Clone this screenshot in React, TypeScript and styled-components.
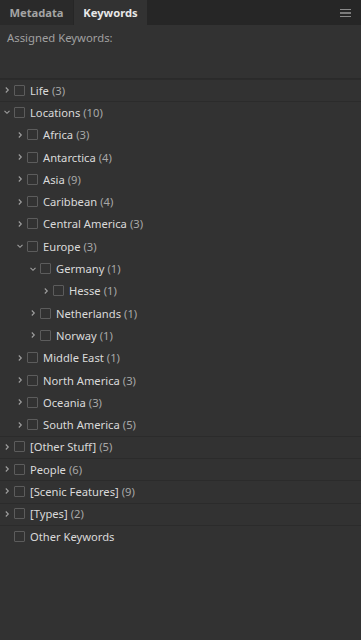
import React from "react";
import styled, { createGlobalStyle } from "styled-components";

const Global = createGlobalStyle`
  html, body { margin: 0; padding: 0; background: #323232; }
  body { font-family: "Noto Sans", "Open Sans", sans-serif; -webkit-font-smoothing: antialiased; }
  * { box-sizing: border-box; }
`;

const Panel = styled.div`
  width: 361px;
  height: 640px;
  background: #323232;
  display: flex;
  flex-direction: column;
  overflow: hidden;
`;

const TabBar = styled.div`
  height: 25px;
  background: #262626;
  display: flex;
  align-items: stretch;
  gap: 1px;
`;

const Tab = styled.div<{ $active?: boolean }>`
  width: 73px;
  display: flex;
  align-items: center;
  justify-content: center;
  font-size: 11.2px;
  font-weight: 700;
  color: ${(p) => (p.$active ? "#e8e8e8" : "#a4a4a4")};
  background: ${(p) => (p.$active ? "#323232" : "#2a2a2a")};
  padding-bottom: 1px;
`;

const MenuButton = styled.div`
  margin-left: auto;
  width: 28px;
  display: flex;
  align-items: center;
  justify-content: center;
  padding-right: 4px;
`;

const Assigned = styled.div`
  height: 54px;
  padding: 5px 7px 0;
  font-size: 11.3px;
  color: #a0a0a0;
  border-bottom: 1px solid #2a2a2a;
`;

const List = styled.div`
  display: flex;
  flex-direction: column;
`;

const Row = styled.div<{ $level: number }>`
  height: 22.3px;
  display: flex;
  align-items: center;
  padding-left: ${(p) => 2 + p.$level * 13}px;
  box-shadow: ${(p) => (p.$level === 0 ? "inset 0 1px 0 #2b2b2b" : "none")};
  font-size: 11.2px;
`;

const Chevron = styled.div`
  width: 10px;
  height: 10px;
  display: flex;
  align-items: center;
  justify-content: center;
`;

const Check = styled.div`
  width: 11px;
  height: 11px;
  margin-left: 2px;
  border: 1px solid #5c5c5c;
  border-radius: 1px;
`;

const Name = styled.span`
  margin-left: 5px;
  color: #dadada;
  white-space: nowrap;
`;

const Count = styled.span`
  color: #a8a8a8;
  margin-left: 3px;
`;

type Item = { name: string; count?: number; level: number; open?: boolean; leaf?: boolean };

const items: Item[] = [
  { name: "Life", count: 3, level: 0 },
  { name: "Locations", count: 10, level: 0, open: true },
  { name: "Africa", count: 3, level: 1 },
  { name: "Antarctica", count: 4, level: 1 },
  { name: "Asia", count: 9, level: 1 },
  { name: "Caribbean", count: 4, level: 1 },
  { name: "Central America", count: 3, level: 1 },
  { name: "Europe", count: 3, level: 1, open: true },
  { name: "Germany", count: 1, level: 2, open: true },
  { name: "Hesse", count: 1, level: 3 },
  { name: "Netherlands", count: 1, level: 2 },
  { name: "Norway", count: 1, level: 2 },
  { name: "Middle East", count: 1, level: 1 },
  { name: "North America", count: 3, level: 1 },
  { name: "Oceania", count: 3, level: 1 },
  { name: "South America", count: 5, level: 1 },
  { name: "[Other Stuff]", count: 5, level: 0 },
  { name: "People", count: 6, level: 0 },
  { name: "[Scenic Features]", count: 9, level: 0 },
  { name: "[Types]", count: 2, level: 0 },
  { name: "Other Keywords", level: 0, leaf: true },
];

const ChevronIcon = ({ open }: { open?: boolean }) => (
  <svg width="8" height="8" viewBox="0 0 8 8">
    {open ? (
      <path d="M1.5 2.8 L4 5.3 L6.5 2.8" fill="none" stroke="#a0a0a0" strokeWidth="1.1" />
    ) : (
      <path d="M2.8 1.5 L5.3 4 L2.8 6.5" fill="none" stroke="#a0a0a0" strokeWidth="1.1" />
    )}
  </svg>
);

export default function App() {
  return (
    <>
      <Global />
      <Panel>
        <TabBar>
          <Tab>Metadata</Tab>
          <Tab $active>Keywords</Tab>
          <MenuButton>
            <svg width="11" height="8" viewBox="0 0 11 8">
              <rect x="0" y="0" width="11" height="1" fill="#8a8a8a" />
              <rect x="0" y="3.5" width="11" height="1" fill="#d0d0d0" />
              <rect x="0" y="7" width="11" height="1" fill="#8a8a8a" />
            </svg>
          </MenuButton>
        </TabBar>
        <Assigned>Assigned Keywords:</Assigned>
        <List>
          {items.map((it, i) => (
            <Row key={i} $level={it.level}>
              <Chevron>{!it.leaf && <ChevronIcon open={it.open} />}</Chevron>
              <Check />
              <Name>
                {it.name}
                {it.count !== undefined && <Count>({it.count})</Count>}
              </Name>
            </Row>
          ))}
        </List>
      </Panel>
    </>
  );
}
